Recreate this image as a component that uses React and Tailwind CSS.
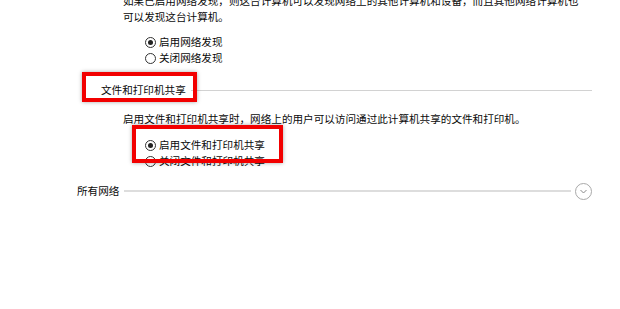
import React from "react";

function Radio({ checked, label }) {
  return (
    <div className="flex items-center h-[16px] pl-[145px]">
      <span className="w-[11px] h-[11px] rounded-full border border-[#333] bg-white flex items-center justify-center shrink-0">
        {checked && <span className="w-[5px] h-[5px] rounded-full bg-[#222]" />}
      </span>
      <span className="ml-[3px] whitespace-nowrap">{label}</span>
    </div>
  );
}

export default function App() {
  return (
    <div className="relative w-[620px] h-[309px] bg-white overflow-hidden text-[10.6px] leading-[16px] text-[#0a0a0a] font-['Noto_Sans_CJK_SC','Noto_Sans',sans-serif]">
      {/* 网络发现 */}
      <div className="ml-[123px] mt-[-7px] whitespace-nowrap">
        <div>如果已启用网络发现，则这台计算机可以发现网络上的其他计算机和设备，而且其他网络计算机也</div>
        <div>可以发现这台计算机。</div>
      </div>
      <div className="mt-[9px] flex flex-col">
        <Radio checked label="启用网络发现" />
        <Radio label="关闭网络发现" />
      </div>

      {/* 文件和打印机共享 */}
      <div className="relative mt-[14px] h-[20px] flex items-center pl-[101px] pr-[28px]">
        <span className="whitespace-nowrap">文件和打印机共享</span>
        <span className="ml-[5px] flex-1 h-px bg-[#d2d2d2]" />
        <div className="absolute left-[82px] top-[-8px] w-[115px] h-[30px] border-[4px] border-[#f20000] shadow-[0_0_4px_rgba(0,0,0,0.35)]" />
      </div>
      <div className="mt-[11px] ml-[123px] whitespace-nowrap">
        启用文件和打印机共享时，网络上的用户可以访问通过此计算机共享的文件和打印机。
      </div>
      <div className="relative mt-[10px] flex flex-col">
        <Radio checked label="启用文件和打印机共享" />
        <Radio label="关闭文件和打印机共享" />
        <div className="absolute left-[132px] top-[-12px] w-[151px] h-[38px] border-[4px] border-[#f20000] shadow-[0_0_4px_rgba(0,0,0,0.35)]" />
      </div>

      {/* 所有网络 */}
      <div className="mt-[14px] h-[16px] flex items-center pl-[77px] pr-[28px]">
        <span className="whitespace-nowrap">所有网络</span>
        <span className="ml-[5px] mr-[4px] flex-1 h-[2px] bg-[#dddddd]" />
        <span className="w-[17px] h-[17px] rounded-full border border-[#a9a9a9] flex items-center justify-center shrink-0">
          <svg width="9" height="9" viewBox="0 0 9 9" fill="none">
            <path d="M1.5 3 L4.5 6 L7.5 3" stroke="#8a8a8a" strokeWidth="1" />
          </svg>
        </span>
      </div>
    </div>
  );
}
